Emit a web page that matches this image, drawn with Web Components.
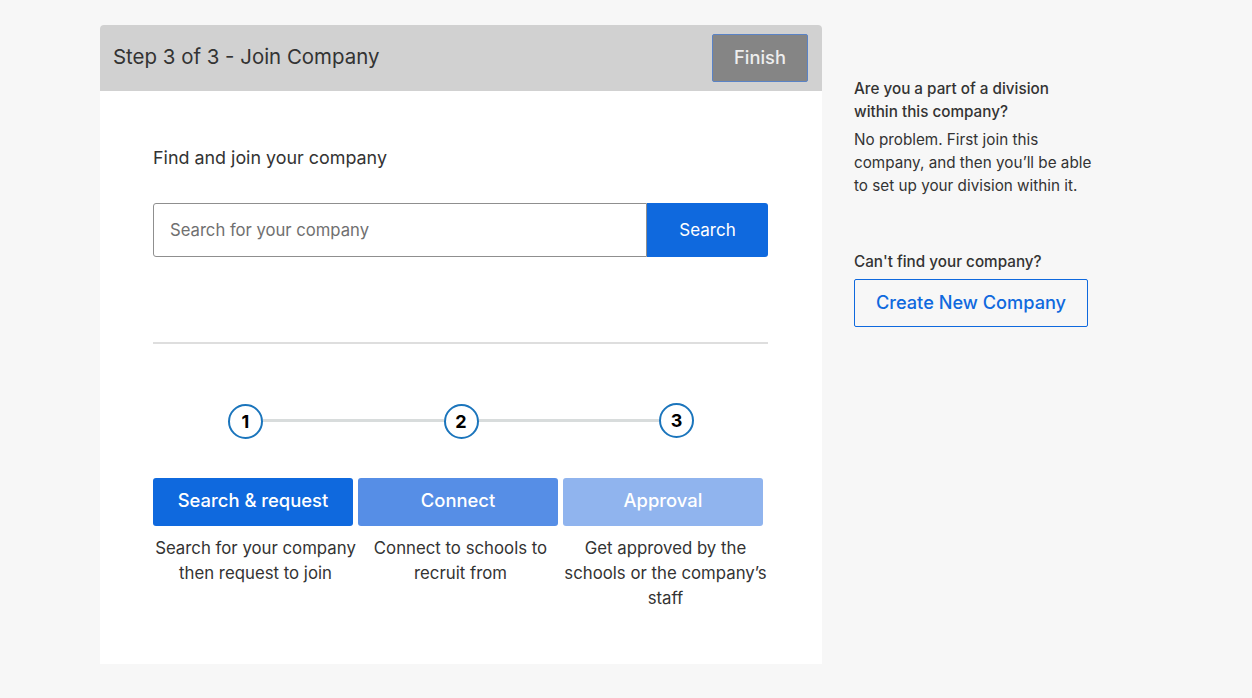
<!DOCTYPE html>
<html><head><meta charset="utf-8"><style>
html,body{margin:0;height:100%;background:#f7f7f7;font-family:Inter,"Liberation Sans",sans-serif;color:#333;}
</style></head><body>
<join-page>
  <wizard-card slot="main" heading="Step 3 of 3 - Join Company" action="Finish">
    <company-search></company-search>
    <step-track></step-track>
    <step-columns>
      <step-column shade="#0f69de" label="Search &amp; request">Search for your company then request to join</step-column>
      <step-column shade="#568ee6" label="Connect">Connect to schools to recruit from</step-column>
      <step-column shade="#90b4ee" label="Approval">Get approved by the schools or the company’s staff</step-column>
    </step-columns>
  </wizard-card>
  <help-aside slot="aside"></help-aside>
</join-page>
<script>
function def(name,html,init){customElements.define(name,class extends HTMLElement{constructor(){super();this.attachShadow({mode:'open'}).innerHTML=html;if(init)init(this,this.shadowRoot);}});}
def('join-page',`<style>:host{display:flex;align-items:flex-start;padding:25px 0 0 100px;gap:32px;box-sizing:border-box}</style><slot name="main"></slot><slot name="aside"></slot>`);
def('wizard-card',`<style>
:host{display:block;width:722px;height:639px;background:#fff;border-radius:4px 4px 0 0;overflow:hidden}
header{height:66px;background:#d1d1d1;display:flex;align-items:center;justify-content:space-between;padding:0 14px 0 13px;box-sizing:border-box}
h1{margin:0 0 4px;font-size:20.45px;font-weight:400;color:#333}
button{width:96px;height:48px;background:#858585;border:1px solid #5a83c6;border-radius:2px;color:#eee;font:500 18.3px Inter,sans-serif;padding:0 0 2px}
.body{padding:53px 54px 0 53px}
</style><header><h1></h1><button></button></header><div class="body"><slot></slot></div>`,(el,s)=>{queueMicrotask(()=>{s.querySelector('h1').textContent=el.getAttribute('heading');s.querySelector('button').textContent=el.getAttribute('action');});});
def('company-search',`<style>
:host{display:block;border-bottom:2px solid #dedede;height:198px}
p{margin:0 0 32px;font-size:17.9px;line-height:27px;color:#333}
.row{display:flex;height:54px}
.in{flex:0 0 494px;box-sizing:border-box;border:1px solid #8f8f8f;border-radius:3px 0 0 3px;font-size:16.65px;color:#707070;display:flex;align-items:center;padding-left:16px;background:#fff}
.btn{flex:1;background:#0f69de;color:#fff;border-radius:0 3px 3px 0;font-size:17px;font-weight:400;display:flex;align-items:center;justify-content:center}
</style><p>Find and join your company</p><div class="row"><div class="in">Search for your company</div><div class="btn">Search</div></div>`);
def('step-track',`<style>
:host{display:flex;align-items:center;margin:59px 0 39px 75px;width:466px;height:36px}
i{flex:1;height:3px;background:#d8dcdc;margin-top:-1px}
b{flex:none;width:35px;height:35px;box-sizing:border-box;border:2px solid #1b75bc;border-radius:50%;background:#fff;color:#000;font:700 18px/31px Inter,sans-serif;text-align:center}
b.up{margin-top:-2px}
</style><b>1</b><i></i><b>2</b><i></i><b class="up">3</b>`);
def('step-columns',`<style>:host{display:flex}</style><slot></slot>`);
def('step-column',`<style>
:host{display:block;width:205px;font-size:16.8px;line-height:25px;text-align:center;color:#333}
.bar{width:200px;height:48px;border-radius:3px;color:#fff;font-size:18.4px;font-weight:500;line-height:45px;margin-bottom:10px}
</style><div class="bar"></div><slot></slot>`,(el,s)=>{queueMicrotask(()=>{const b=s.querySelector('.bar');b.textContent=el.getAttribute('label');b.style.background=el.getAttribute('shade');});});
def('help-aside',`<style>
:host{display:block;width:250px;padding-top:52px;font-size:15.25px;line-height:23px;color:#333}
h2{margin:0;font-size:15.25px;font-weight:500;line-height:23px}
p{margin:5px 0 53px}
a{display:flex;align-items:center;justify-content:center;box-sizing:border-box;width:234px;height:48px;margin-top:6px;padding-bottom:2px;border:1px solid #0f69de;border-radius:2px;color:#0f69de;font-size:18.2px;font-weight:500}
</style><h2>Are you a part of a division<br>within this company?</h2><p>No problem. First join this<br>company, and then you’ll be able<br>to set up your division within it.</p><h2>Can't find your company?</h2><a>Create New Company</a>`);
</script></body></html>
